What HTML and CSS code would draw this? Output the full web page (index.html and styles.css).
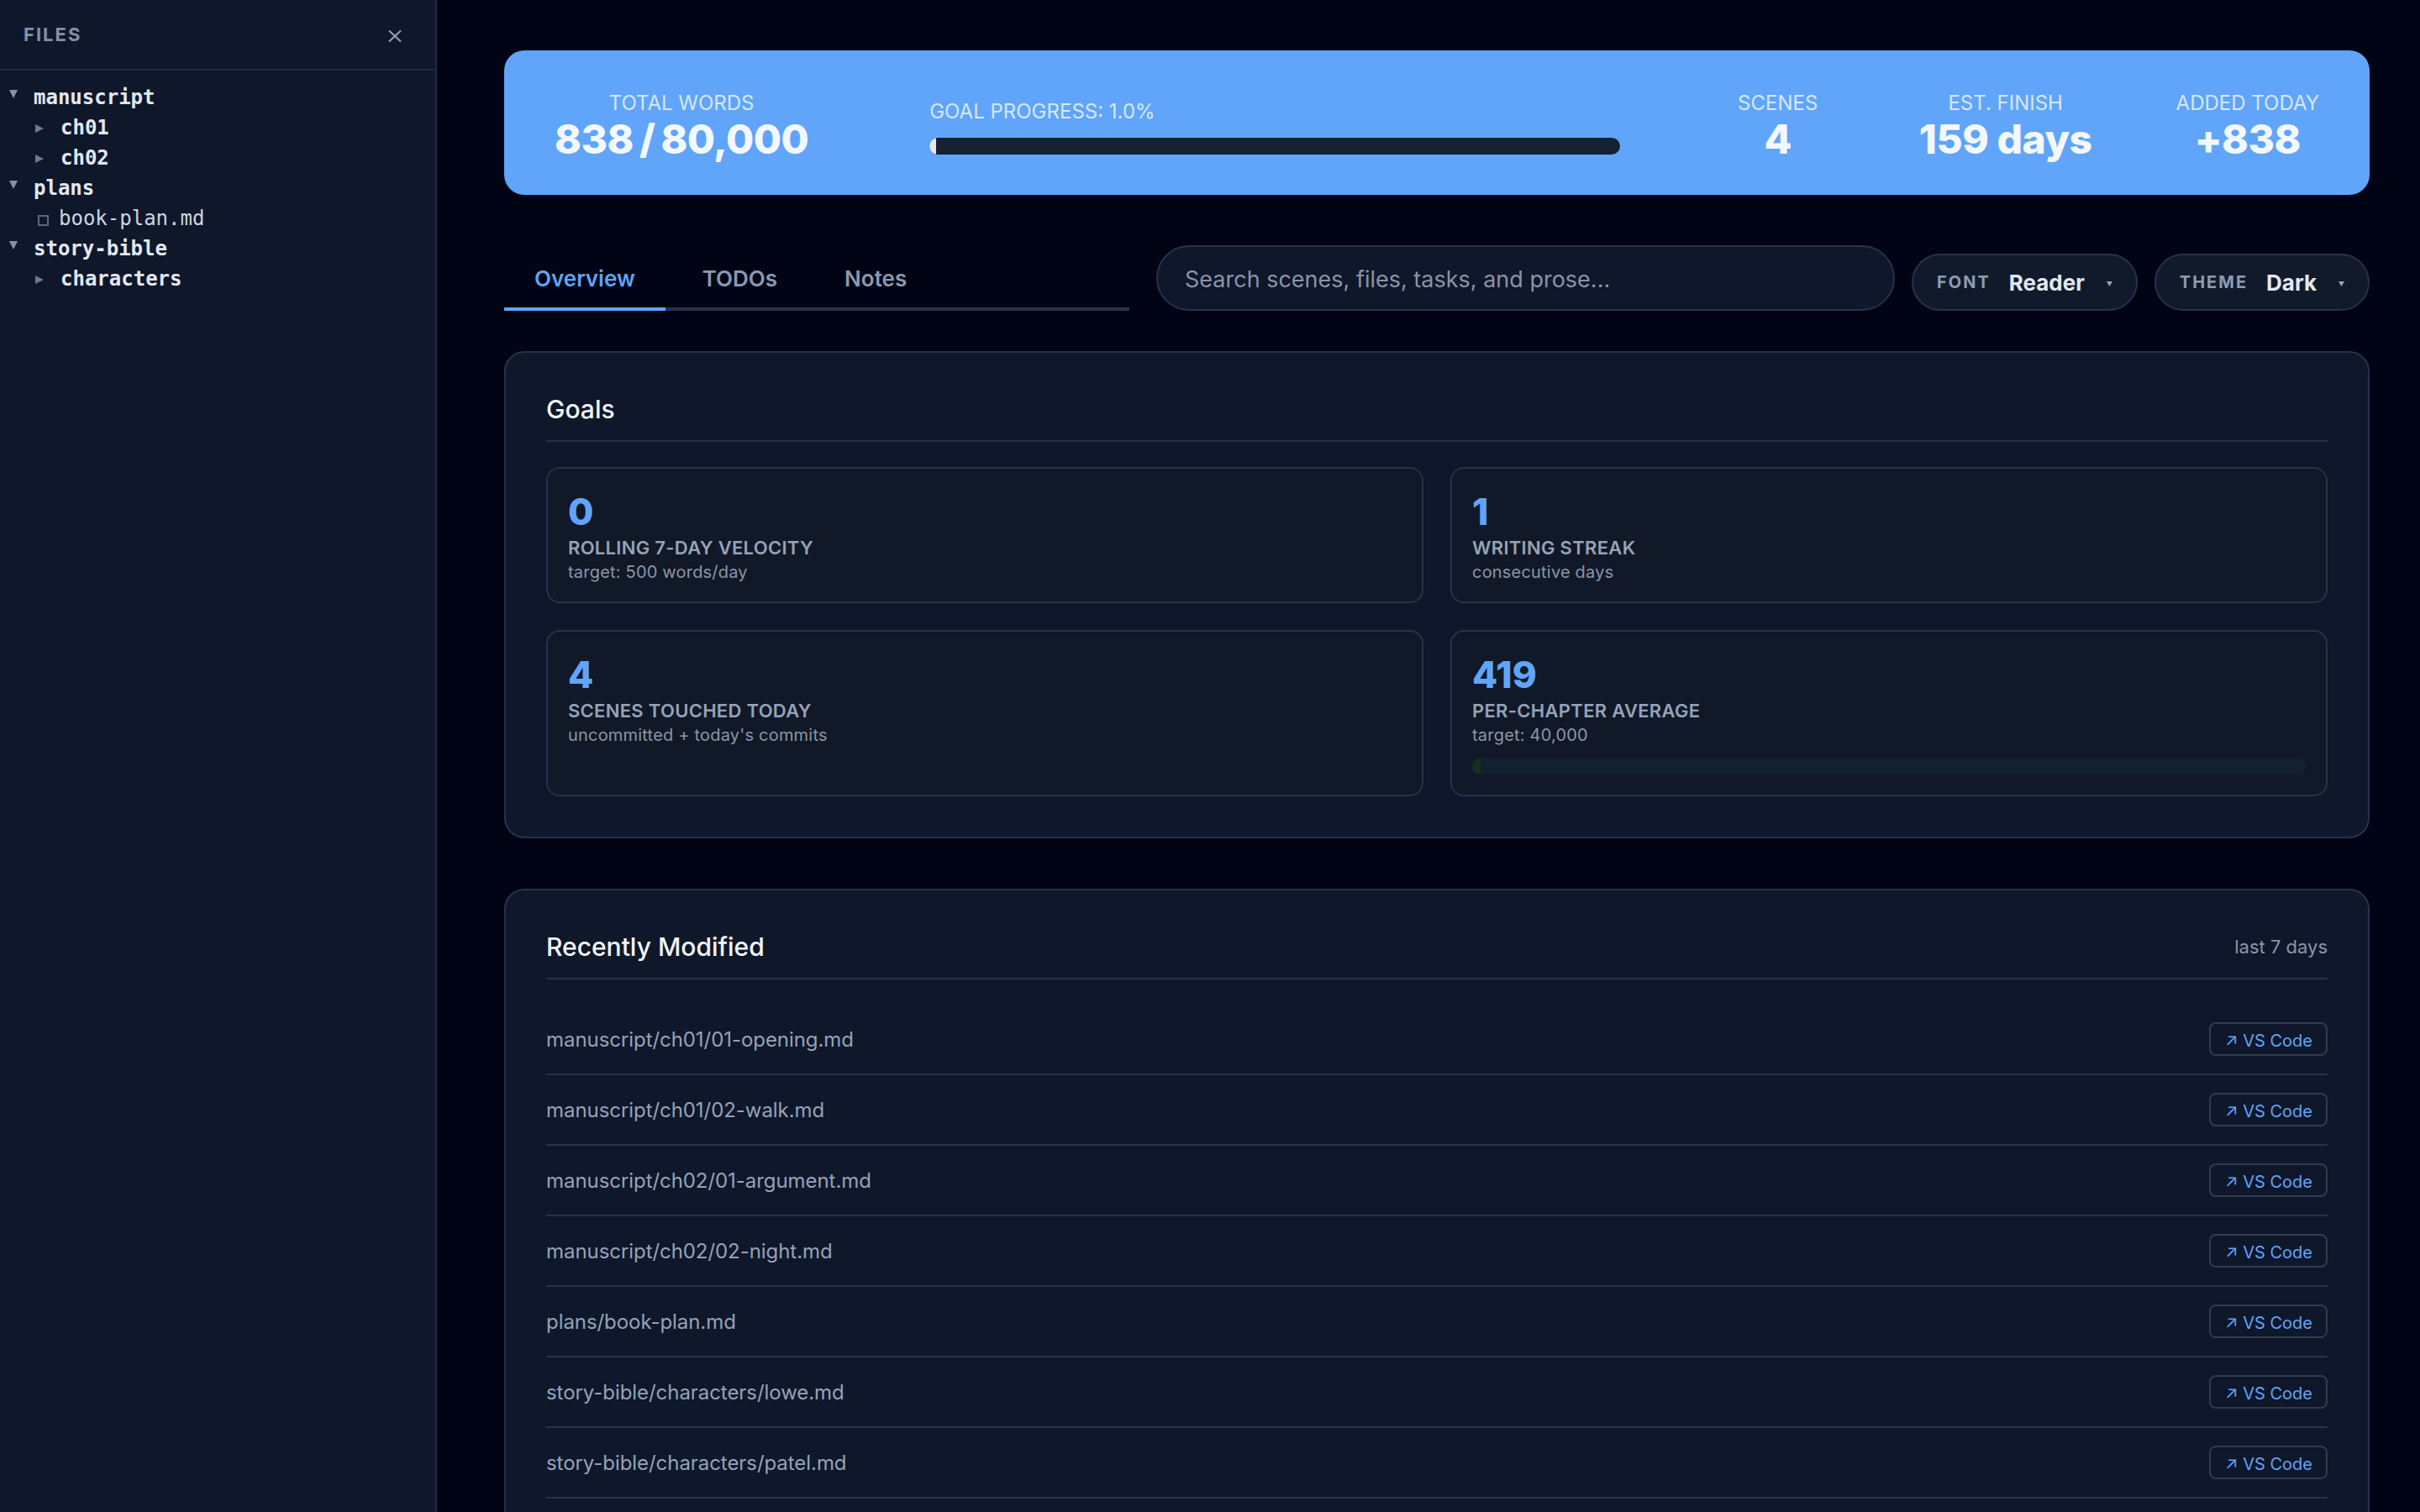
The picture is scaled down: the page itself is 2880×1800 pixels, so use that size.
FILE: index.html

```html
<!DOCTYPE html>
<html lang="en">
<head>
    <meta charset="UTF-8">
    <title>Manuscript dashboard</title>
    <link rel="stylesheet" href="styles.css">
</head>
<body>

<aside class="sidebar">
    <div class="sidebar-head">
        <span class="sidebar-title">FILES</span>
        <svg class="close-icon" viewBox="0 0 16 16"><path d="M1 1.500 15 14.500M15 1.500 1 14.500"/></svg>
    </div>
    <ul class="tree">
        <li class="node root"><svg class="caret-down" viewBox="0 0 10 10"><polygon points="0,0 10,0 5,10"/></svg><b>manuscript</b></li>
        <li class="node child"><svg class="caret-right" viewBox="0 0 10 10"><polygon points="0,0 10,5 0,10"/></svg><b>ch01</b></li>
        <li class="node child"><svg class="caret-right" viewBox="0 0 10 10"><polygon points="0,0 10,5 0,10"/></svg><b>ch02</b></li>
        <li class="node root"><svg class="caret-down" viewBox="0 0 10 10"><polygon points="0,0 10,0 5,10"/></svg><b>plans</b></li>
        <li class="node file"><i class="file-box"></i><span>book-plan.md</span></li>
        <li class="node root"><svg class="caret-down" viewBox="0 0 10 10"><polygon points="0,0 10,0 5,10"/></svg><b>story-bible</b></li>
        <li class="node child"><svg class="caret-right" viewBox="0 0 10 10"><polygon points="0,0 10,5 0,10"/></svg><b>characters</b></li>
    </ul>
</aside>

<main class="main">

    <section class="hero">
        <div class="stat">
            <div class="stat-label">TOTAL WORDS</div>
            <div class="stat-value stat-total">838 / 80,000</div>
        </div>
        <div class="goal">
            <div class="stat-label">GOAL PROGRESS: 1.0%</div>
            <div class="goal-bar"><div class="goal-fill"></div></div>
        </div>
        <div class="stat stat-scenes">
            <div class="stat-label">SCENES</div>
            <div class="stat-value">4</div>
        </div>
        <div class="stat">
            <div class="stat-label">EST. FINISH</div>
            <div class="stat-value">159 days</div>
        </div>
        <div class="stat">
            <div class="stat-label">ADDED TODAY</div>
            <div class="stat-value">+838</div>
        </div>
    </section>

    <div class="toolbar">
        <nav class="tabs">
            <a class="tab active">Overview</a>
            <a class="tab">TODOs</a>
            <a class="tab">Notes</a>
        </nav>
        <input class="search" type="text" placeholder="Search scenes, files, tasks, and prose...">
        <div class="picker">
            <span class="picker-label">FONT</span>
            <span class="picker-value">Reader</span>
            <svg class="picker-caret" viewBox="0 0 10 10" preserveAspectRatio="none"><polygon points="0,0 10,0 5,10"/></svg>
        </div>
        <div class="picker">
            <span class="picker-label">THEME</span>
            <span class="picker-value">Dark</span>
            <svg class="picker-caret" viewBox="0 0 10 10" preserveAspectRatio="none"><polygon points="0,0 10,0 5,10"/></svg>
        </div>
    </div>

    <section class="card">
        <div class="card-head">
            <h2>Goals</h2>
        </div>
        <div class="goal-grid">
            <div class="goal-card">
                <div class="goal-num">0</div>
                <div class="goal-label">ROLLING 7-DAY VELOCITY</div>
                <div class="goal-sub">target: 500 words/day</div>
            </div>
            <div class="goal-card">
                <div class="goal-num">1</div>
                <div class="goal-label">WRITING STREAK</div>
                <div class="goal-sub">consecutive days</div>
            </div>
            <div class="goal-card">
                <div class="goal-num">4</div>
                <div class="goal-label">SCENES TOUCHED TODAY</div>
                <div class="goal-sub">uncommitted + today's commits</div>
            </div>
            <div class="goal-card">
                <div class="goal-num">419</div>
                <div class="goal-label">PER-CHAPTER AVERAGE</div>
                <div class="goal-sub">target: 40,000</div>
                <div class="chapter-bar"><div class="chapter-fill"></div></div>
            </div>
        </div>
    </section>

    <section class="card recent">
        <div class="card-head">
            <h2>Recently Modified</h2>
            <span class="card-note">last 7 days</span>
        </div>
        <ul class="recent-list">
            <li class="recent-row"><span>manuscript/ch01/01-opening.md</span><a class="vs-btn">↗ VS Code</a></li>
            <li class="recent-row"><span>manuscript/ch01/02-walk.md</span><a class="vs-btn">↗ VS Code</a></li>
            <li class="recent-row"><span>manuscript/ch02/01-argument.md</span><a class="vs-btn">↗ VS Code</a></li>
            <li class="recent-row"><span>manuscript/ch02/02-night.md</span><a class="vs-btn">↗ VS Code</a></li>
            <li class="recent-row"><span>plans/book-plan.md</span><a class="vs-btn">↗ VS Code</a></li>
            <li class="recent-row"><span>story-bible/characters/lowe.md</span><a class="vs-btn">↗ VS Code</a></li>
            <li class="recent-row"><span>story-bible/characters/patel.md</span><a class="vs-btn">↗ VS Code</a></li>
        </ul>
    </section>

</main>

</body>
</html>
```

FILE: styles.css

```css
* {
    box-sizing: border-box;
}

html, body {
    height: 100%;
}

body {
    margin: 0;
    display: flex;
    overflow: hidden;
    background: #010414;
    font-family: Inter, "Liberation Sans", sans-serif;
    color: #e2e8f0;
}

ul {
    list-style: none;
    margin: 0;
    padding: 0;
}

/* sidebar */
.sidebar {
    flex: 0 0 520px;
    height: 100%;
    background: #0f172a;
    border-right: 2px solid #1e2b40;
}

.sidebar-head {
    height: 84px;
    display: flex;
    align-items: center;
    justify-content: space-between;
    padding: 0 40px 0 28px;
    border-bottom: 2px solid #1e2b40;
}

.sidebar-title {
    font-size: 22px;
    font-weight: 700;
    letter-spacing: 2px;
    color: #8191a9;
}

.close-icon {
    width: 16px;
    height: 16px;
    margin-top: 4px;
    fill: none;
    stroke: #94a3b8;
    stroke-width: 2;
}

.tree {
    padding-top: 14px;
    font-family: "DejaVu Sans Mono", monospace;
    font-size: 24px;
}

.node {
    height: 36px;
    display: flex;
    align-items: center;
    color: #e2e8f0;
}

.node b {
    font-weight: 700;
}

.root {
    padding-left: 11px;
}

.child {
    padding-left: 42px;
}

.file {
    padding-left: 45px;
    color: #cbd5e1;
}

.caret-down {
    width: 10px;
    height: 10px;
    margin: -8px 19px 0 0;
    fill: #8492a8;
}

.caret-right {
    width: 10px;
    height: 10px;
    margin: 2px 20px 0 0;
    fill: #6a7a90;
}

.file-box {
    width: 13px;
    height: 13px;
    margin: 5px 12px 0 0;
    border: 2px solid #5a677c;
}

/* main column */
.main {
    flex: 1;
    min-width: 0;
    height: 100%;
    padding: 60px 60px 0 80px;
    overflow: hidden;
}

.hero {
    height: 172px;
    display: flex;
    gap: 100px;
    padding: 48px 60px 38px;
    background: #60a5fa;
    border-radius: 24px;
    color: #f3f8ff;
}

.stat {
    text-align: center;
    white-space: nowrap;
}

.stat-scenes {
    min-width: 136px;
}

.stat-label {
    font-size: 24px;
    line-height: 30px;
    color: rgba(255, 255, 255, 0.75);
}

.stat-value {
    font-size: 48px;
    line-height: 56px;
    font-weight: 800;
    letter-spacing: -0.5px;
}

.stat-total {
    word-spacing: -3px;
}

.goal {
    flex: 1;
    margin: 10px 20px 0 44px;
}

.goal-bar {
    height: 20px;
    margin-top: 16px;
    background: #162133;
    border-radius: 10px;
    overflow: hidden;
}

.goal-fill {
    width: 1%;
    height: 100%;
    background: #e5e7eb;
}

.toolbar {
    display: flex;
    align-items: flex-end;
    height: 78px;
    margin: 60px 0 48px;
}

.tabs {
    width: 744px;
    display: flex;
    gap: 8px;
    margin-right: 32px;
    border-bottom: 4px solid #26334a;
}

.tab {
    padding: 15px 36px 17px;
    margin-bottom: -4px;
    border-bottom: 4px solid transparent;
    font-size: 26px;
    line-height: 34px;
    font-weight: 600;
    color: #8a99b0;
}

.tab.active {
    color: #60a5fa;
    border-bottom-color: #60a5fa;
}

.search {
    flex: 1;
    min-width: 0;
    height: 78px;
    padding: 2px 32px 0;
    background: #0f172a;
    border: 2px solid #26334a;
    border-radius: 39px;
    font-family: inherit;
    font-size: 27px;
    color: #e2e8f0;
    outline: none;
}

.search::placeholder {
    color: #8a94a6;
    opacity: 1;
}

.picker {
    height: 68px;
    display: flex;
    align-items: center;
    margin-left: 20px;
    padding: 0 28px;
    background: #111a2b;
    border: 2px solid #26334a;
    border-radius: 34px;
}

.picker-label {
    font-size: 20px;
    font-weight: 700;
    letter-spacing: 2px;
    color: #8d9bb2;
    margin-right: 22px;
}

.picker-value {
    font-size: 26px;
    font-weight: 700;
    color: #e2e8f0;
    margin-right: 26px;
}

.picker-caret {
    width: 7px;
    height: 6px;
    margin-top: 4px;
    fill: #94a3b8;
}

/* cards */
.card {
    padding: 48px;
    background: #0f172a;
    border: 2px solid #26334a;
    border-radius: 24px;
}

.recent {
    margin-top: 60px;
}

.card-head {
    display: flex;
    align-items: center;
    justify-content: space-between;
    padding-bottom: 18px;
    margin-bottom: 30px;
    border-bottom: 2px solid #26334a;
}

.card-head h2 {
    margin: 0;
    font-size: 30px;
    line-height: 38px;
    font-weight: 500;
    color: #f1f5f9;
}

.card-note {
    font-size: 22px;
    color: #8a96a8;
}

.goal-grid {
    display: grid;
    grid-template-columns: 1fr 1fr;
    gap: 32px;
}

.goal-card {
    padding: 24px 24px 22px;
    background: #111827;
    border: 2px solid #26334a;
    border-radius: 16px;
}

.goal-num {
    font-size: 44px;
    line-height: 54px;
    font-weight: 800;
    color: #60a5fa;
}

.goal-label {
    font-size: 22px;
    line-height: 32px;
    font-weight: 600;
    letter-spacing: 0.3px;
    color: #94a3b8;
}

.goal-sub {
    font-size: 20px;
    line-height: 26px;
    letter-spacing: 0.2px;
    color: #8a96a8;
}

.chapter-bar {
    height: 20px;
    margin: 14px 0 2px;
    background: #15202f;
    border-radius: 10px;
    overflow: hidden;
}

.chapter-fill {
    width: 1%;
    height: 100%;
    background: #14311f;
}

.recent-row {
    height: 84px;
    display: flex;
    align-items: center;
    justify-content: space-between;
    border-bottom: 2px solid #26334a;
    font-size: 24px;
    letter-spacing: -0.06px;
    color: #94a3b8;
}

.vs-btn {
    height: 40px;
    display: flex;
    align-items: center;
    padding: 3px 16px 0 17px;
    border: 2px solid #2f3c50;
    border-radius: 8px;
    font-size: 20px;
    letter-spacing: 0;
    color: #60a5fa;
}
```
